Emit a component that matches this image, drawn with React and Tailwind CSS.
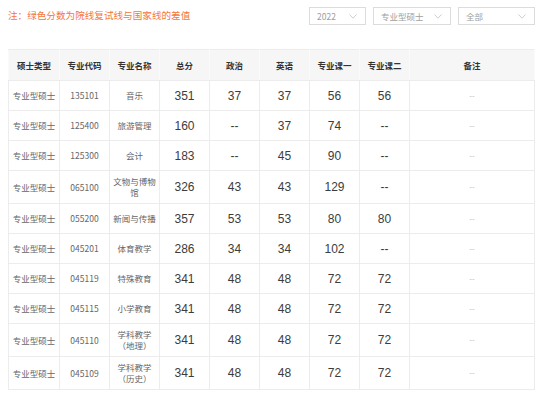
import React from 'react';

const rows = [
  { code: '135101', name: '音乐', total: '351', zz: '37', yy: '37', k1: '56', k2: '56' },
  { code: '125400', name: '旅游管理', total: '160', zz: '--', yy: '37', k1: '74', k2: '--' },
  { code: '125300', name: '会计', total: '183', zz: '--', yy: '45', k1: '90', k2: '--' },
  { code: '065100', name: '文物与博物馆', total: '326', zz: '43', yy: '43', k1: '129', k2: '--' },
  { code: '055200', name: '新闻与传播', total: '357', zz: '53', yy: '53', k1: '80', k2: '80' },
  { code: '045201', name: '体育教学', total: '286', zz: '34', yy: '34', k1: '102', k2: '--' },
  { code: '045119', name: '特殊教育', total: '341', zz: '48', yy: '48', k1: '72', k2: '72' },
  { code: '045115', name: '小学教育', total: '341', zz: '48', yy: '48', k1: '72', k2: '72' },
  { code: '045110', name: '学科教学（地理）', total: '341', zz: '48', yy: '48', k1: '72', k2: '72' },
  { code: '045109', name: '学科教学（历史）', total: '341', zz: '48', yy: '48', k1: '72', k2: '72' },
];

const headers = ['硕士类型', '专业代码', '专业名称', '总分', '政治', '英语', '专业课一', '专业课二', '备注'];

function Chevron() {
  return (
    <svg width="8" height="5" viewBox="0 0 8 5" fill="none" stroke="#c8c8c8" strokeWidth="0.9">
      <path d="M0.5 0.5 L4 4.2 L7.5 0.5" />
    </svg>
  );
}

function Select({ label, width }) {
  return (
    <div className={`flex items-center justify-between h-[18px] border border-[#dcdcdc] bg-white pl-[7px] pr-[8px] ${width}`}>
      <span className="text-[8.5px] text-[#a0a0a0] leading-none">{label}</span>
      <Chevron />
    </div>
  );
}

export default function App() {
  const cjk = { fontFamily: '"Noto Sans CJK SC", "Liberation Sans", sans-serif' };
  return (
    <div className="w-[538px] h-[398px] bg-white pl-2 pr-[3px] overflow-hidden" style={cjk}>
      <div className="flex items-center justify-between h-[32px]">
        <p className="text-[9.6px] text-[#f5763a] leading-none">注：绿色分数为院线复试线与国家线的差值</p>
        <div className="flex gap-[7px]">
          <Select label="2022" width="w-[57px]" />
          <Select label="专业型硕士" width="w-[78px]" />
          <Select label="全部" width="w-[77px]" />
        </div>
      </div>

      <table className="mt-[17px] w-[527px] table-fixed border-collapse">
        <colgroup>
          <col className="w-[51px]" />
          <col className="w-[50px]" />
          <col className="w-[50px]" />
          <col className="w-[50px]" />
          <col className="w-[50px]" />
          <col className="w-[50px]" />
          <col className="w-[50px]" />
          <col className="w-[50px]" />
          <col />
        </colgroup>
        <thead>
          <tr className="h-[31px] bg-[#f6f6f6]">
            {headers.map(h => (
              <th key={h} className="border border-[#ececec] border-x-[#fafafa] text-[8.5px] font-bold text-[#333] text-center px-1">
                {h}
              </th>
            ))}
          </tr>
        </thead>
        <tbody>
          {rows.map(r => (
            <tr key={r.code} className="h-[30px]">
              <td className="border border-[#ececec] text-center px-[3px] py-[5px] text-[8.5px] leading-[11px] text-[#666]">专业型硕士</td>
              <td className="border border-[#ececec] text-center px-[3px] py-[5px] text-[8.5px] leading-[11px] text-[#666]">{r.code}</td>
              <td className="border border-[#ececec] text-center px-[3px] py-[5px] text-[8.5px] leading-[11px] text-[#666]">{r.name}</td>
              {[r.total, r.zz, r.yy, r.k1, r.k2].map((v, i) => (
                <td key={i} className="border border-[#ececec] text-center px-1 text-[12px] text-[#3c3c3c] font-['Liberation_Sans',sans-serif]">
                  {v}
                </td>
              ))}
              <td className="border border-[#ececec] text-center text-[8px] text-[#bdbdbd]">--</td>
            </tr>
          ))}
        </tbody>
      </table>
    </div>
  );
}
